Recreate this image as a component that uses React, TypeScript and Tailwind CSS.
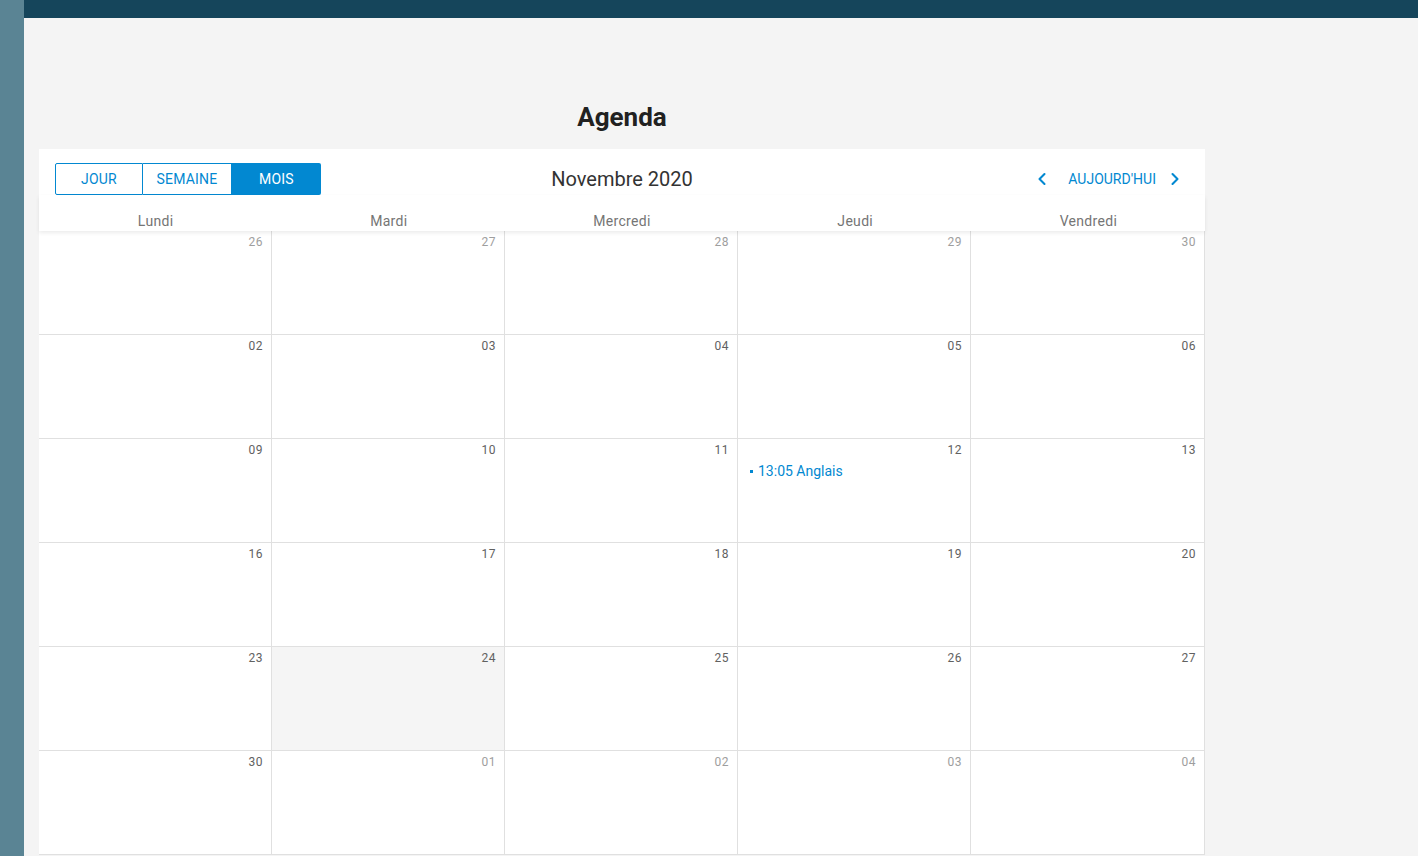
import { ChevronLeft, ChevronRight } from "lucide-react"

const days = ["Lundi", "Mardi", "Mercredi", "Jeudi", "Vendredi"]

type Cell = { n: string; out?: boolean; today?: boolean; event?: string }

const weeks: Cell[][] = [
  [{ n: "26", out: true }, { n: "27", out: true }, { n: "28", out: true }, { n: "29", out: true }, { n: "30", out: true }],
  [{ n: "02" }, { n: "03" }, { n: "04" }, { n: "05" }, { n: "06" }],
  [{ n: "09" }, { n: "10" }, { n: "11" }, { n: "12", event: "13:05 Anglais" }, { n: "13" }],
  [{ n: "16" }, { n: "17" }, { n: "18" }, { n: "19" }, { n: "20" }],
  [{ n: "23" }, { n: "24", today: true }, { n: "25" }, { n: "26" }, { n: "27" }],
  [{ n: "30" }, { n: "01", out: true }, { n: "02", out: true }, { n: "03", out: true }, { n: "04", out: true }],
]

export default function App() {
  return (
    <div className="flex min-h-[856px] w-full bg-[#f4f4f4] font-['Roboto',sans-serif]">
      {/* barre latérale */}
      <div className="w-[24px] shrink-0 bg-[#5a8494]" />

      <div className="flex flex-1 flex-col">
        <div className="h-[18px] bg-[#15455b]" />

        <div className="w-[1166px] pl-[15px] box-content">
          <h1 className="mt-[80px] text-center text-[26px] font-bold leading-[38px] text-[#212121]">Agenda</h1>

          <div className="mt-[13px] bg-white">
            {/* toolbar */}
            <div className="flex items-center px-[16px] pt-[14px]">
              <div className="flex w-[380px] text-[14px] tracking-[0.2px]">
                <button className="h-[32px] w-[88px] rounded-l-[2px] border border-[#0288d1] uppercase text-[#0288d1]">Jour</button>
                <button className="h-[32px] w-[89px] border-y border-r border-[#0288d1] uppercase text-[#0288d1]">Semaine</button>
                <button className="h-[32px] w-[89px] rounded-r-[2px] bg-[#0288d1] uppercase text-white">Mois</button>
              </div>
              <div className="flex-1 text-center text-[20px] text-[#333]">Novembre 2020</div>
              <div className="flex w-[380px] items-center justify-end pr-[4px] text-[14px] text-[#0288d1]">
                <ChevronLeft size={20} strokeWidth={2.5} />
                <span className="ml-[16px]">AUJOURD'HUI</span>
                <ChevronRight size={20} strokeWidth={2.5} className="ml-[9px]" />
              </div>
            </div>

            <div className="relative z-10 grid h-[36px] grid-cols-5 shadow-[0_2px_4px_rgba(0,0,0,0.08)]">
              {days.map((d) => (
                <div key={d} className="pt-[16px] text-center text-[14px] leading-[20px] tracking-[0.3px] text-[#757575]">
                  {d}
                </div>
              ))}
            </div>
          </div>

          <div className="border-r border-[#e0e0e0] bg-white">
            {weeks.map((w, i) => (
              <div key={i} className="grid h-[104px] grid-cols-5 border-b border-[#e0e0e0]">
                {w.map((c, j) => (
                  <div
                    key={j}
                    className={`relative px-[8px] pt-[2px] ${j < 4 ? "border-r border-[#e0e0e0]" : ""} ${c.today ? "bg-[#f5f5f5]" : ""}`}
                  >
                    <div className={`text-right text-[12px] leading-[18px] tracking-[0.5px] ${c.out ? "text-[#9e9e9e]" : "text-[#616161]"}`}>
                      {c.n}
                    </div>
                    {c.event && (
                      <div className="mt-[2px] flex items-center gap-[5px] pl-[4px] text-[14px] text-[#0288d1]">
                        <span className="h-[3px] w-[3px] bg-[#0288d1]" />
                        {c.event}
                      </div>
                    )}
                  </div>
                ))}
              </div>
            ))}
          </div>
        </div>
      </div>
    </div>
  )
}
